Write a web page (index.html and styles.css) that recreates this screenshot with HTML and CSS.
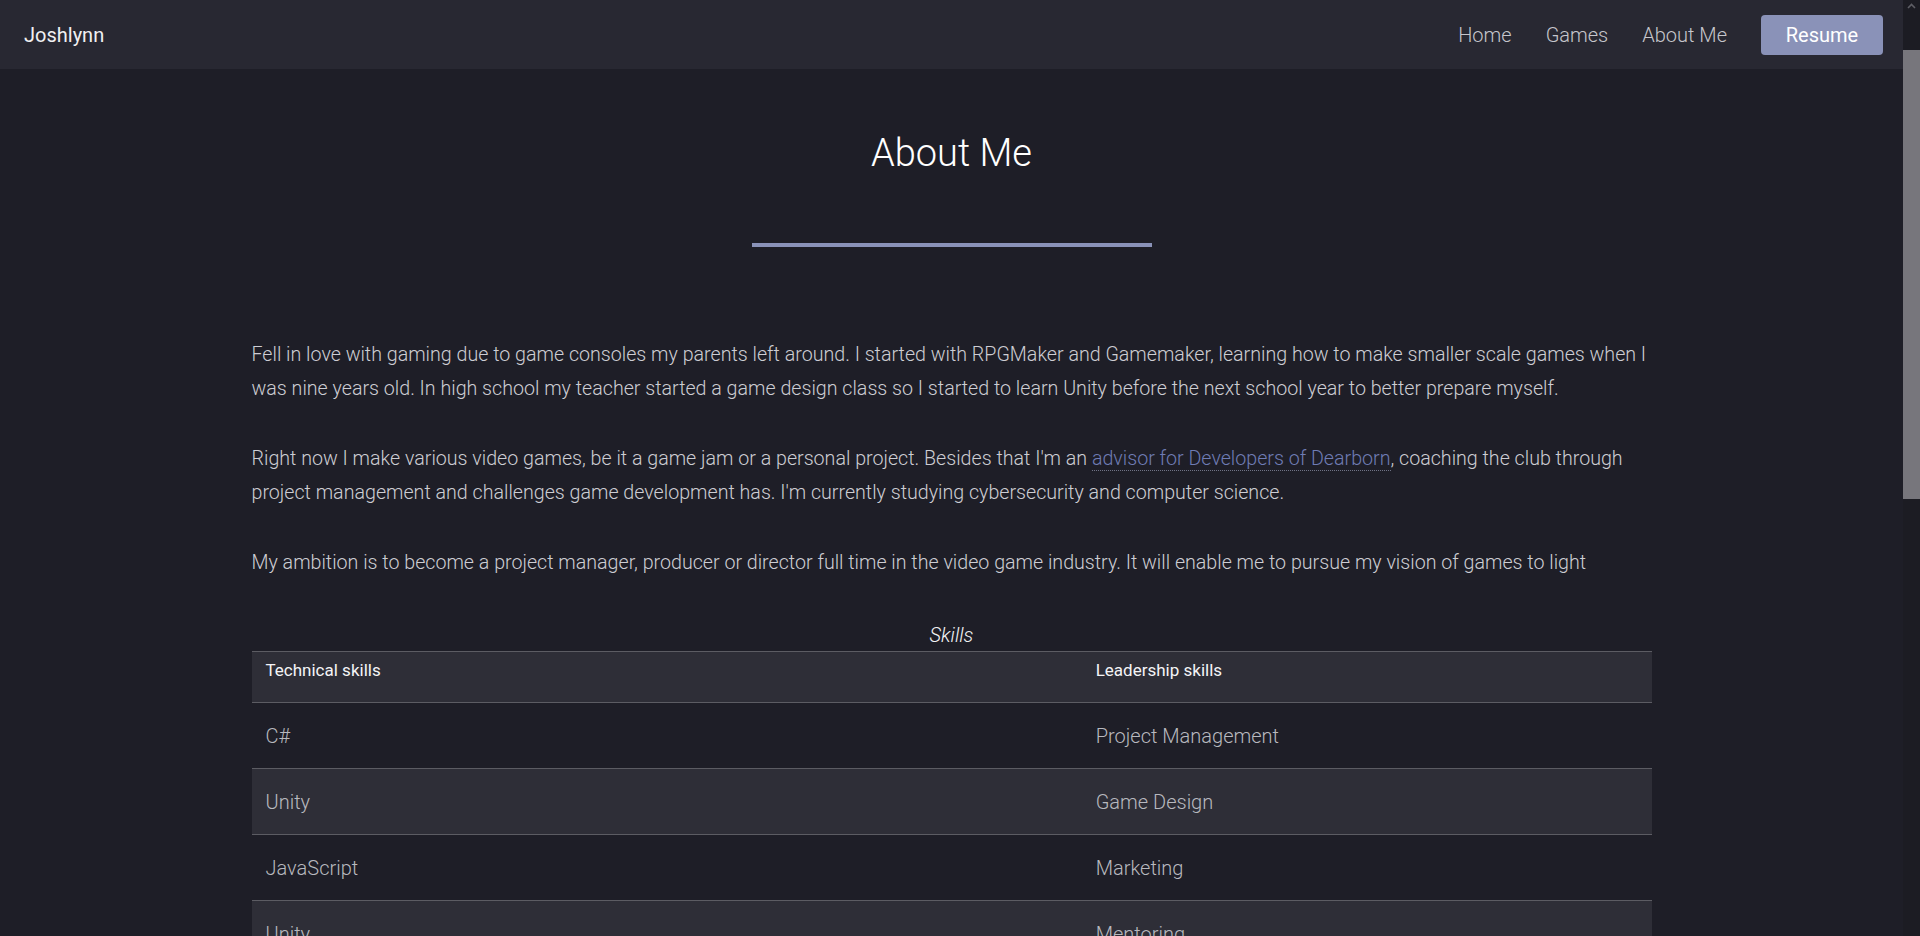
FILE: index.html
```html
<!DOCTYPE html>
<html lang="en">
<head>
<meta charset="utf-8">
<title>About Me - Joshlynn</title>
<link rel="stylesheet" href="styles.css">
</head>
<body>
<div class="page">
  <header class="navbar">
    <a class="brand" href="#">Joshlynn</a>
    <nav class="nav">
      <a class="nav-link" href="#">Home</a>
      <a class="nav-link" href="#">Games</a>
      <a class="nav-link" href="#">About Me</a>
      <a class="btn-resume" href="#">Resume</a>
    </nav>
  </header>

  <main class="content">
    <h1 class="title">About Me</h1>
    <div class="divider"></div>

    <section class="bio">
      <p>Fell in love with gaming due to game consoles my parents left around. I started with RPGMaker and Gamemaker, learning how to make smaller scale games when I was nine years old. In high school my teacher started a game design class so I started to learn Unity before the next school year to better prepare myself.</p>
      <p>Right now I make various video games, be it a game jam or a personal project. Besides that I'm an <a class="link" href="#">advisor for Developers of Dearborn</a>, coaching the club through project management and challenges game development has. I'm currently studying cybersecurity and computer science.</p>
      <p>My ambition is to become a project manager, producer or director full time in the video game industry. It will enable me to pursue my vision of games to light</p>
    </section>

    <table class="skills">
      <caption>Skills</caption>
      <thead>
        <tr><th class="col-tech">Technical skills</th><th>Leadership skills</th></tr>
      </thead>
      <tbody>
        <tr><td>C#</td><td>Project Management</td></tr>
        <tr><td>Unity</td><td>Game Design</td></tr>
        <tr><td>JavaScript</td><td>Marketing</td></tr>
        <tr><td>Unity</td><td>Mentoring</td></tr>
        <tr><td>HTML &amp; CSS</td><td>Public Speaking</td></tr>
        <tr><td>Python</td><td>Team Leadership</td></tr>
      </tbody>
    </table>
  </main>
</div>

<div class="scrollbar" aria-hidden="true">
  <div class="scroll-arrow">
    <svg width="9" height="6" viewBox="0 0 9 6"><path d="M1 5 L4.5 1.5 L8 5" fill="none" stroke="#5e5e65" stroke-width="1.6"/></svg>
  </div>
  <div class="scroll-thumb"></div>
</div>
</body>
</html>
```

FILE: styles.css
```css
html {
  background: #1e1e27;
}

body {
  margin: 0;
  background: #1e1e27;
  font-family: Roboto, "Liberation Sans", sans-serif;
  color: #cdcdd3;
}

.page {
  margin-right: 17px;
  padding-bottom: 200px;
}

a {
  text-decoration: none;
}

/* fixed window scrollbar */
.scrollbar {
  position: fixed;
  top: 0;
  right: 0;
  width: 17px;
  height: 100vh;
  background: #1c1c23;
  display: flex;
  flex-direction: column;
}

.scroll-arrow {
  height: 17px;
  display: flex;
  justify-content: center;
  padding-top: 3px;
  box-sizing: border-box;
}

.scroll-thumb {
  margin-top: 33px;
  height: 449px;
  background: #77767c;
}

.navbar {
  height: 69px;
  background: #282832;
  display: flex;
  align-items: center;
  justify-content: space-between;
  padding: 0 20px 0 24px;
}

.brand {
  font-size: 20px;
  font-weight: 400;
  color: #f0f0f2;
}

.nav {
  display: flex;
  align-items: center;
  gap: 34px;
}

.nav-link {
  font-size: 20px;
  font-weight: 300;
  color: #c6c6cc;
}

.btn-resume {
  display: flex;
  align-items: center;
  justify-content: center;
  width: 122px;
  height: 40px;
  box-sizing: border-box;
  border-radius: 4px;
  background: #8a92b8;
  color: #ffffff;
  font-size: 20px;
  font-weight: 400;
}

.content {
  width: 1400px;
  margin: 0 auto;
}

.title {
  margin: 0;
  padding-top: 62px;
  font-size: 38px;
  font-weight: 300;
  line-height: normal;
  text-align: center;
  color: #ffffff;
}

.divider {
  width: 400px;
  height: 4px;
  margin: 68px auto 0;
  background: #8a92b8;
}

.bio {
  padding-top: 91px;
}

.bio p {
  margin: 0 0 36px;
  font-size: 19.65px;
  font-weight: 300;
  line-height: 34px;
  color: #cdcdd3;
}

.link {
  color: #6f7cb4;
  border-bottom: 1px dotted #707386;
}

.skills {
  width: 100%;
  border-collapse: collapse;
  margin-top: 43px;
}

.skills caption {
  font-size: 20px;
  font-style: italic;
  font-weight: 300;
  color: #f2f2f4;
  padding-bottom: 4px;
  line-height: normal;
}

.skills th {
  text-align: left;
  font-size: 17px;
  font-weight: 400;
  color: #f4f4f6;
  background: #2e2e37;
  padding: 8px 14px 22px;
  border-top: 1px solid #5c5c63;
  border-bottom: 1px solid #5c5c63;
  line-height: 20px;
}

.skills .col-tech {
  width: 59.3%;
}

.skills td {
  height: 66px;
  box-sizing: border-box;
  padding: 0 14px;
  font-size: 20px;
  font-weight: 300;
  color: #b8b9bf;
  border-bottom: 1px solid #5c5c63;
  vertical-align: middle;
}

.skills tbody tr:nth-child(even) td {
  background: #2e2e37;
}
```
